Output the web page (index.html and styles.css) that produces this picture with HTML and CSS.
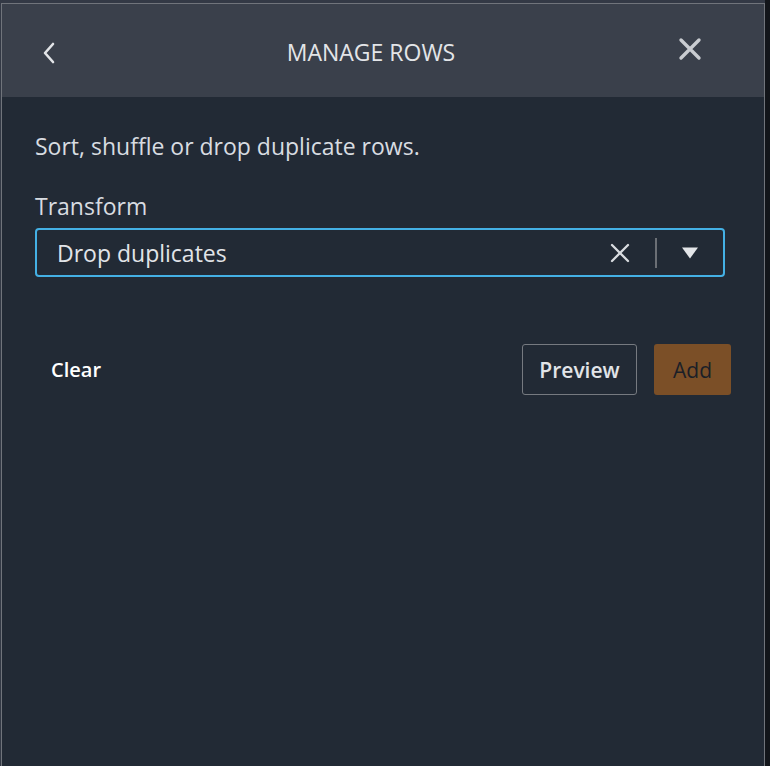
FILE: index.html
```html
<!DOCTYPE html>
<html lang="en">
<head>
<meta charset="utf-8">
<title>Manage rows</title>
<link rel="stylesheet" href="styles.css">
</head>
<body>
<div class="frame">
  <div class="panel">
    <header class="panel-header">
      <button class="icon-btn back" aria-label="Back">
        <svg width="14" height="22" viewBox="0 0 14 22"><path d="M11 2 L3 11 L11 20" fill="none" stroke="#e3e5e8" stroke-width="2.6" stroke-linecap="round" stroke-linejoin="round"/></svg>
      </button>
      <h1 class="title">MANAGE ROWS</h1>
      <button class="icon-btn close" aria-label="Close">
        <svg width="24" height="24" viewBox="0 0 24 24"><path d="M3 3 L21 21 M21 3 L3 21" fill="none" stroke="#c9ccd1" stroke-width="3.4" stroke-linecap="round"/></svg>
      </button>
    </header>
    <main class="panel-body">
      <p class="desc">Sort, shuffle or drop duplicate rows.</p>
      <label class="field-label">Transform</label>
      <div class="select">
        <span class="select-value">Drop duplicates</span>
        <span class="select-clear">
          <svg width="20" height="20" viewBox="0 0 20 20"><path d="M2 2 L18 18 M18 2 L2 18" fill="none" stroke="#d9dce0" stroke-width="2.3" stroke-linecap="round"/></svg>
        </span>
        <span class="select-divider"></span>
        <span class="select-arrow">
          <svg width="16" height="12" viewBox="0 0 16 12"><path d="M0 0.5 H16 L8 11.5 Z" fill="#e3e5e8"/></svg>
        </span>
      </div>
      <div class="actions">
        <button class="btn-link">Clear</button>
        <div class="actions-right">
          <button class="btn btn-outline">Preview</button>
          <button class="btn btn-primary">Add</button>
        </div>
      </div>
    </main>
  </div>
  <div class="side"></div>
</div>
</body>
</html>
```

FILE: styles.css
```css
* { box-sizing: border-box; }
html, body { height: 100%; }
body {
  margin: 0;
  background: #333945;
  font-family: "Open Sans", "Liberation Sans", sans-serif;
  overflow: hidden;
}
.frame {
  display: flex;
  height: 100%;
  padding-top: 3px;
}
.panel {
  width: 764px;
  margin-left: 1px;
  border-top: 1px solid #70747b;
  border-left: 1px solid #70747b;
  border-right: 1px solid #70747b;
  background: #222a35;
  display: flex;
  flex-direction: column;
}
.side {
  flex: 1;
  background: #12151a;
  margin-top: -3px;
}
.panel-header {
  height: 93px;
  background: #3a404b;
  display: flex;
  align-items: center;
  justify-content: space-between;
  padding: 0 62px 0 40px;
  position: relative;
}
.icon-btn {
  background: none;
  border: 0;
  padding: 0;
  display: flex;
  cursor: pointer;
}
.back { margin-top: 4px; }
.close { margin-top: -4px; }
.title {
  margin: 0;
  position: absolute;
  left: 0;
  right: 0;
  text-align: center;
  font-size: 23px;
  font-weight: 400;
  color: #e3e5e8;
  pointer-events: none;
  margin-left: -24px;
  margin-top: 2px;
}
.panel-body {
  padding: 34px 39px 0 33px;
  color: #d8dce1;
}
.desc {
  margin: 0;
  font-size: 23px;
  line-height: 30px;
}
.field-label {
  display: block;
  margin-top: 30px;
  font-size: 23px;
  line-height: 30px;
}
.select {
  margin-top: 7px;
  height: 49px;
  border: 2px solid #44b0e4;
  border-radius: 4px;
  display: flex;
  align-items: center;
  padding: 0 25px 0 20px;
}
.select-value {
  flex: 1;
  font-size: 23px;
  color: #e1e4e8;
}
.select-clear { display: flex; margin-right: 25px; }
.select-divider {
  width: 2px;
  height: 30px;
  background: #6b6f75;
  margin-right: 25px;
}
.select-arrow { display: flex; margin-top: 1px; }
.actions {
  margin-top: 67px;
  display: flex;
  align-items: center;
  justify-content: space-between;
  margin-right: -6px;
}
.btn-link {
  background: none;
  border: 0;
  color: #ffffff;
  font-family: inherit;
  font-size: 20px;
  font-weight: 600;
  padding: 0 0 0 16px;
}
.actions-right { display: flex; gap: 17px; }
.btn {
  height: 51px;
  border-radius: 3px;
  font-family: inherit;
  font-size: 21px;
  font-weight: 600;
}
.btn-outline {
  background: transparent;
  border: 1px solid #767a80;
  color: #e1e4e8;
  width: 115px;
}
.btn-primary {
  background: #7b4f27;
  border: 0;
  color: #1b1f27;
  font-weight: 500;
  width: 77px;
}
```
